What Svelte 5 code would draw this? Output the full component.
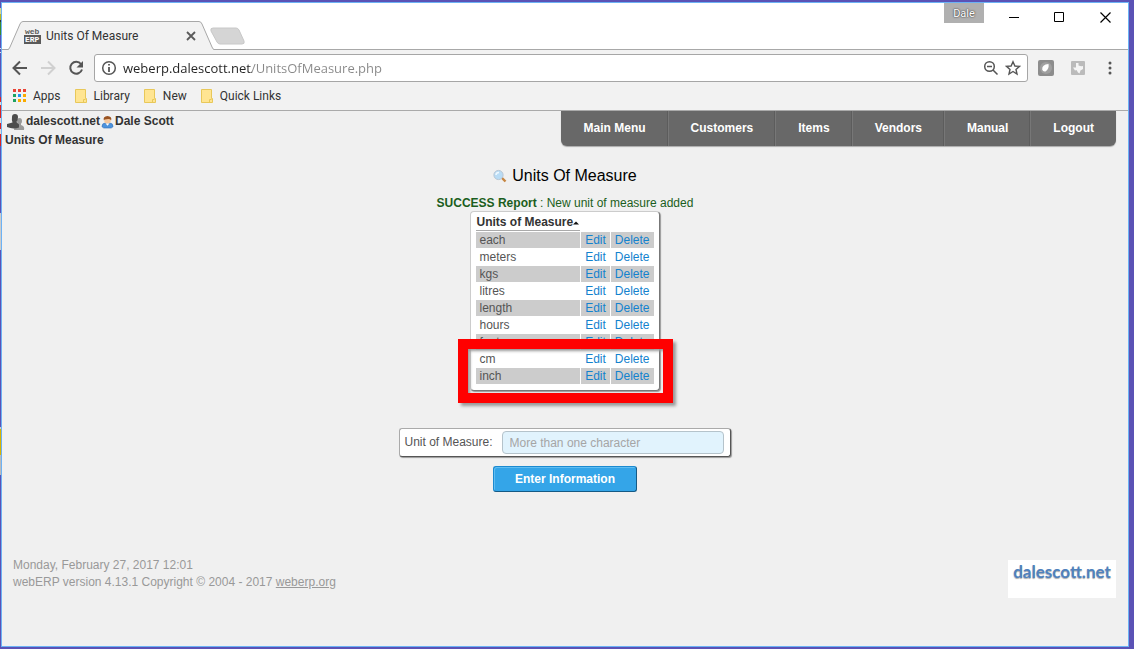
<script lang="ts">
    let url = 'weberp.dalescott.net/UnitsOfMeasure.php';
    let unitName = '';

    const bookmarks = ['Library', 'New', 'Quick Links'];
    const menu = ['Main Menu', 'Customers', 'Items', 'Vendors', 'Manual', 'Logout'];
    const units = ['each', 'meters', 'kgs', 'litres', 'length', 'hours', 'feet', 'cm', 'inch'];
    const appColors = ['#ea4335', '#ea4335', '#ea4335', '#1ea362', '#2196f3', '#f9ab00', '#1ea362', '#f9ab00', '#f9ab00'];
</script>

<div class="desktop">
    <div class="window">
        <div class="titlebar">
            <div class="tab">
                <svg class="tab-shape" viewBox="0 0 207 29" preserveAspectRatio="none" aria-hidden="true">
                    <path d="M0 28.5H1Q2 28.500 3 26L13 3Q14 .5 16 .5H192Q194 .5 195 3L205 26Q206 28.500 207 28.500V29H0Z" fill="#f2f2f2" />
                    <path d="M0 28.500H1Q2 28.500 3 26L13 3Q14 .5 16 .5H192Q194 .5 195 3L205 26Q206 28.500 207 28.500" fill="none" stroke="#a8a8a8" />
                </svg>
                <svg class="favicon" width="17" height="17" viewBox="0 0 17 17" aria-hidden="true">
                    <rect y="8" width="17" height="9" fill="#5a5a5a" />
                    <text x="1" y="7" fill="#5a5a5a">web</text>
                    <text x="1" y="15" fill="#fff">ERP</text>
                </svg>
                <span class="tab-title">Units Of Measure</span>
                <button class="plain" aria-label="Close tab">
                    <svg width="10" height="10" viewBox="0 0 10 10"><path d="M1 1L9 9M9 1L1 9" stroke="#5a5a5a" stroke-width="1.800" /></svg>
                </button>
            </div>
            <button class="plain new-tab" aria-label="New tab">
                <svg width="36" height="19" viewBox="0 0 36 19">
                    <path d="M3 1H26Q28 1 29 3L34 14Q35 17 32 17H10Q8 17 7 15L1 4Q0 1 3 1Z" fill="#d5d5d5" stroke="#c8c8c8" />
                </svg>
            </button>
            <div class="window-controls">
                <button class="user">Dale</button>
                <button class="plain" aria-label="Minimize"><svg width="11" height="11" viewBox="0 0 11 11"><path d="M1 5.500H11" stroke="#000" /></svg></button>
                <button class="plain" aria-label="Maximize"><svg width="11" height="11" viewBox="0 0 11 11"><path d="M.5 .5H9.500V9.500H.5Z" fill="none" stroke="#000" /></svg></button>
                <button class="plain" aria-label="Close"><svg width="11" height="11" viewBox="0 0 11 11"><path d="M.5 .5L10.500 10.500M10.500 .5L.5 10.500" stroke="#000" stroke-width="1.200" /></svg></button>
            </div>
        </div>

        <div class="toolbar">
            <button class="plain" aria-label="Back">
                <svg width="16" height="16" viewBox="0 0 16 16"><path d="M15 8H2M8 1.500L1.500 8L8 14.500" fill="none" stroke="#555" stroke-width="2" /></svg>
            </button>
            <button class="plain" aria-label="Forward">
                <svg width="16" height="16" viewBox="0 0 16 16"><path d="M1 8H14M8 1.500L14.500 8L8 14.500" fill="none" stroke="#d0d0d0" stroke-width="2" /></svg>
            </button>
            <button class="plain" aria-label="Reload">
                <svg width="16" height="16" viewBox="0 0 16 16">
                    <path d="M13 4A6 6 0 1 0 14 9.500" fill="none" stroke="#555" stroke-width="2" />
                    <path d="M15 1V7.500H8.500Z" fill="#555" />
                </svg>
            </button>
            <div class="omnibox">
                <svg width="16" height="16" viewBox="0 0 16 16" aria-hidden="true">
                    <circle cx="8" cy="8" r="6.300" fill="none" stroke="#555" stroke-width="1.500" />
                    <path d="M8 4V5.600M8 7V12" stroke="#555" stroke-width="1.800" />
                </svg>
                <input class="url" type="text" aria-label="Address" bind:value={url} />
                <button class="plain" aria-label="Zoom">
                    <svg width="16" height="16" viewBox="0 0 16 16">
                        <circle cx="6.500" cy="6.500" r="4.800" fill="none" stroke="#555" stroke-width="1.500" />
                        <path d="M4 6.500H9M10 10L14.500 14.500" stroke="#555" stroke-width="1.500" />
                    </svg>
                </button>
                <button class="plain" aria-label="Bookmark this page">
                    <svg width="16" height="16" viewBox="0 0 16 16">
                        <path d="M8 1.800L9.900 6L14.500 6.400L11 9.400L12 14L8 11.500L4 14L5 9.400L1.500 6.400L6.100 6Z" fill="none" stroke="#555" stroke-width="1.400" />
                    </svg>
                </button>
            </div>
            <div class="extensions">
                <button class="plain" aria-label="Leaf extension">
                    <svg width="16" height="16" viewBox="0 0 16 16">
                        <rect width="16" height="16" rx="2" fill="#8d8d8d" />
                        <circle cx="8" cy="8" r="6" fill="#a0a0a0" />
                        <path d="M4.200 9.500Q3.800 4.500 10.500 4Q11.500 9 7.500 11.500Q4.800 12 4.200 9.500Z" fill="#fff" />
                    </svg>
                </button>
                <button class="plain" aria-label="Map extension">
                    <svg width="16" height="16" viewBox="0 0 16 16">
                        <rect x="1" y="1" width="14" height="14" rx="1" fill="#bbb" />
                        <path d="M6 3H8.500V5.500Q11 6.500 13 6V9L10.500 10.500L9.500 13.500L8 12.500L6.500 10L5 10.500L3 7.500H6Z" fill="#f5f5f5" />
                    </svg>
                </button>
                <button class="plain" aria-label="Menu">
                    <svg width="16" height="16" viewBox="0 0 16 16" fill="#555">
                        <circle cx="8" cy="3" r="1.500" /><circle cx="8" cy="8" r="1.500" /><circle cx="8" cy="13" r="1.500" />
                    </svg>
                </button>
            </div>
        </div>

        <div class="bookmarks">
            <a href="#apps">
                <svg width="14" height="13" viewBox="0 0 14 13" aria-hidden="true">
                    {#each appColors as color, i}
                        <rect x={(i % 3) * 5} y={Math.floor(i / 3) * 5} width="3" height="3" fill={color} />
                    {/each}
                </svg>
                Apps
            </a>
            {#each bookmarks as bookmark}
                <a href="#bookmark">
                    <svg width="13" height="14" viewBox="0 0 13 14" aria-hidden="true">
                        <path d="M.5 .5H10.500V9.500H11.500V13.500H.5Z" fill="#ffe592" stroke="#e8c85a" />
                        <path d="M8.500 13V10.500H10.500" fill="none" stroke="#e8c85a" />
                    </svg>
                    {bookmark}
                </a>
            {/each}
        </div>

        <div class="page">
            <header>
                <div class="account">
                    <div class="account-line">
                        <svg width="20" height="18" viewBox="0 0 20 18" aria-hidden="true">
                            <ellipse cx="14.500" cy="8" rx="2.500" ry="3" fill="#999" />
                            <path d="M9 17Q9 13 13 12V10H16V12Q20 13 19 17Z" fill="#999" />
                            <path d="M7 4Q7 1 10 1Q13 1 13 4Q13 7 11.500 9L14 11.500V14.500Q8 16.500 2 14V11L7.500 9.500Q6.500 7 7 4Z" fill="#4c4c4c" />
                        </svg>
                        <span>dalescott.net</span>
                        <svg width="13" height="14" viewBox="0 0 14 14" aria-hidden="true">
                            <path d="M1 12Q1 8 5 8H9Q13 8 13 12L11 13.500H3Z" fill="#4d93dc" stroke="#2d6bb5" stroke-width=".6" />
                            <circle cx="7" cy="5.500" r="3.500" fill="#f5c79c" />
                            <path d="M3 5Q2 1 7 .5Q12 1 11 5Q9 3 6 4Q4 4 3 5Z" fill="#9a5422" />
                            <path d="M5 8.500H9L7 11Z" fill="#fff" />
                        </svg>
                        <span>Dale Scott</span>
                    </div>
                    <div>Units Of Measure</div>
                </div>
                <nav>
                    {#each menu as item}
                        <a href="#menu">{item}</a>
                    {/each}
                </nav>
            </header>

            <main>
                <h1>
                    <svg width="14" height="14" viewBox="0 0 14 14" aria-hidden="true">
                        <path d="M8.500 8.500L12.500 12.500" stroke="#c68642" stroke-width="2.400" />
                        <circle cx="5.500" cy="6" r="4.600" fill="#b9dcf5" stroke="#b8c6d4" />
                        <path d="M3 6Q3 3.500 6 3.500" fill="none" stroke="#eef8ff" stroke-width="1.500" />
                    </svg>
                    Units Of Measure
                </h1>
                <p class="success"><b>SUCCESS Report</b> : New unit of measure added</p>

                <div class="units">
                    <table>
                        <thead>
                            <tr>
                                <th>Units of Measure<svg width="6" height="6" viewBox="0 0 6 6" aria-hidden="true"><path d="M0 4.500L3 1.500L6 4.500Z" fill="#111" /></svg></th>
                            </tr>
                        </thead>
                        <tbody>
                            {#each units as unit}
                                <tr>
                                    <td>{unit}</td>
                                    <td class="action"><a href="#edit">Edit</a></td>
                                    <td class="action"><a href="#delete">Delete</a></td>
                                </tr>
                            {/each}
                        </tbody>
                    </table>
                    <div class="highlight"></div>
                </div>

                <form on:submit|preventDefault>
                    <div class="field">
                        <label for="unit-name">Unit of Measure:</label>
                        <input id="unit-name" type="text" placeholder="More than one character" bind:value={unitName} />
                    </div>
                    <button class="submit" type="submit">Enter Information</button>
                </form>
            </main>

            <footer>
                <div>
                    <div>Monday, February 27, 2017 12:01</div>
                    <div>webERP version 4.13.1 Copyright © 2004 - 2017 <a href="#weberp">weberp.org</a></div>
                </div>
                <div class="logo">dalescott.net</div>
            </footer>
        </div>
    </div>
</div>

<style>
    :global(body) {
        background: #5b52b5;
    }

    .desktop {
        box-sizing: border-box;
        display: flex;
        min-height: 100vh;
        padding: 2px 5px 2px 1px;
        /* sliver of the windows behind, left of the browser */
        background:
            linear-gradient(
                #5b52b5 8px, #d8d890 8px 14px, #b8b820 14px 20px, #333 20px 22px, #3a8a2a 22px 35px,
                #5b52b5 35px 48px, #ddd 48px 49px, #5b52b5 49px 52px, #ddd 52px 53px, #5b52b5 53px 97px,
                #d22 97px 102px, #ddd 102px 105px, #d22 105px 118px, #ddd 118px 123px, #d22 123px 129px,
                #ddd 129px 134px, #d22 134px 146px, #5b52b5 146px 213px, #ccc 213px 250px, #5b52b5 250px 427px,
                #ccc 427px 429px, #d8b400 429px 455px, #bbb 455px 475px, #5b52b5 475px
            ) left / 1px 100% no-repeat,
            #5b52b5;
        font: 12px/17px "Liberation Sans", Arial, sans-serif;
    }

    .window {
        box-sizing: border-box;
        flex: 1;
        display: flex;
        flex-direction: column;
        border: 1px solid #6cb2f5;
        background: #f2f2f2;
    }

    .plain {
        display: flex;
        padding: 0;
        border: none;
        background: none;
    }

    .titlebar {
        display: flex;
        height: 46px;
        background: #fff;
        border-bottom: 1px solid #a8a8a8;
    }

    .tab {
        position: relative;
        box-sizing: border-box;
        display: flex;
        align-items: center;
        width: 207px;
        height: 29px;
        margin: 18px 0 0 5px;
        padding: 0 18px 0 17px;
        font: 12px/16px Roboto, sans-serif;
        color: #333;
    }

    .tab-shape {
        position: absolute;
        left: 0;
        top: 0;
        width: 100%;
        height: 100%;
    }

    .favicon,
    .tab-title,
    .tab button {
        position: relative;
    }

    .favicon {
        overflow: visible;
    }

    .favicon text {
        font: bold 8px "Liberation Mono", monospace;
    }

    .tab-title {
        flex: 1;
        margin-left: 5px;
    }

    .new-tab {
        margin: 24px 0 0 -4px;
        align-self: flex-start;
    }

    .window-controls {
        display: flex;
        gap: 35px;
        height: 28px;
        margin-left: auto;
        padding-right: 17px;
        align-items: center;
    }

    .user {
        align-self: flex-start;
        width: 40px;
        height: 20px;
        margin-right: -11px;
        padding: 0;
        border: none;
        background: #b0b0b0;
        color: #fff;
        font: 11px Roboto, sans-serif;
        text-shadow: 0 0 2px #333, 0 0 1px #555;
    }

    .toolbar {
        display: flex;
        align-items: center;
        gap: 12px;
        height: 36px;
        padding: 0 10px;
    }

    .omnibox {
        box-sizing: border-box;
        flex: 1;
        display: flex;
        align-items: center;
        gap: 6px;
        height: 28px;
        margin-left: -2px;
        padding: 0 6px;
        border: 1px solid #a6a6a6;
        border-radius: 3px;
        background: #fff;
    }

    .url {
        flex: 1;
        min-width: 0;
        padding: 0;
        border: none;
        outline: none;
        background: linear-gradient(to right, #222 129px, #888 129px);
        background-clip: text;
        color: transparent;
        font: 13px/20px "Open Sans", sans-serif;
    }

    .extensions {
        display: flex;
        gap: 16px;
        margin-left: -2px;
    }

    .bookmarks {
        box-sizing: border-box;
        display: flex;
        gap: 14px;
        height: 25px;
        padding: 0 11px 5px;
        align-items: center;
        border-bottom: 1px solid #aaa;
        font: 12px/16px Roboto, sans-serif;
    }

    .bookmarks a {
        display: flex;
        align-items: center;
        gap: 6px;
        color: #333;
        text-decoration: none;
    }

    .page {
        flex: 1;
        background: #f0f0f0;
        color: #555;
    }

    header {
        display: flex;
        justify-content: space-between;
        align-items: flex-start;
        padding: 0 12px 0 3px;
    }

    .account {
        padding-top: 1px;
        color: #333;
        font-weight: bold;
        line-height: 19px;
    }

    .account-line {
        display: flex;
        align-items: center;
        gap: 1px;
    }

    nav {
        display: flex;
        overflow: hidden;
        border-radius: 0 0 6px 6px;
        background: #686868;
        box-shadow: 0 1px 1px #aaa;
    }

    nav a {
        padding: 0 21px 0 22px;
        border-right: 1px solid #5c5c5c;
        border-left: 1px solid #777;
        color: #fff;
        font-weight: bold;
        line-height: 35px;
        text-decoration: none;
    }

    nav a:first-child {
        border-left-color: transparent;
    }

    nav a:last-child {
        border-right-color: transparent;
    }

    main {
        display: flex;
        flex-direction: column;
        align-items: center;
    }

    h1 {
        display: flex;
        align-items: center;
        gap: 5px;
        margin: 16px 0 9px;
        color: #000;
        font-size: 16px;
        font-weight: normal;
        line-height: 20px;
    }

    .success {
        margin: 0;
        color: #1b5e20;
        line-height: 16px;
    }

    .units {
        position: relative;
        padding: 2px 4px 5px;
        border: 1px solid #ccc;
        border-right-color: #777;
        border-bottom-color: #777;
        border-radius: 4px;
        background: #fff;
        box-shadow: 1px 1px 1px #999;
    }

    table {
        border-spacing: 1px;
        line-height: 16px;
    }

    th {
        padding: 0 1px 0 0;
        border-bottom: 1px solid #aaa;
        color: #333;
        line-height: 15px;
        text-align: left;
        white-space: nowrap;
    }

    td {
        padding: 0 3px;
    }

    .action {
        padding: 0 4px;
    }

    tbody tr:nth-child(odd) td {
        background: #ccc;
    }

    td a {
        color: #1382ce;
        text-decoration: none;
    }

    .highlight {
        position: absolute;
        right: -14px;
        bottom: -13px;
        left: -13px;
        box-sizing: border-box;
        height: 64px;
        border: 10px solid #f00;
        box-shadow: 3px 3px 3px #999, inset 2px 2px 3px #999;
        pointer-events: none;
    }

    form {
        display: flex;
        flex-direction: column;
        align-items: center;
        gap: 9px;
        margin-top: 37px;
    }

    .field {
        display: flex;
        align-items: center;
        gap: 9px;
        padding: 2px 6px 2px 4px;
        border: 1px solid #aaa;
        border-right-color: #555;
        border-bottom-color: #555;
        border-radius: 3px;
        background: #fff;
        box-shadow: 1px 1px 1px #999;
    }

    .field input {
        box-sizing: border-box;
        width: 222px;
        height: 23px;
        padding: 0 7px;
        border: 1px solid #b5c3cb;
        border-radius: 4px;
        background: #e1f3fd;
        font: inherit;
    }

    .field input::placeholder {
        color: #a5a5a5;
    }

    .submit {
        padding: 4px 21px;
        border: 1px solid #1b8ad0;
        border-right-color: #155a85;
        border-bottom-color: #155a85;
        border-radius: 3px;
        background: #34a5e8;
        box-shadow: inset 1px 1px 0 #5fbdf2;
        color: #fff;
        font: bold 12px/16px "Liberation Sans", Arial, sans-serif;
    }

    footer {
        display: flex;
        justify-content: space-between;
        align-items: flex-start;
        padding: 65px 12px 0 11px;
        color: #999;
    }

    footer a {
        color: #999;
    }

    .logo {
        width: 108px;
        height: 38px;
        margin-top: 3px;
        background: #fff;
        color: #4f81bd;
        font: bold 17px/24px Lato, sans-serif;
        text-align: center;
        text-shadow: 0 1px 1px #aaa;
    }
</style>
